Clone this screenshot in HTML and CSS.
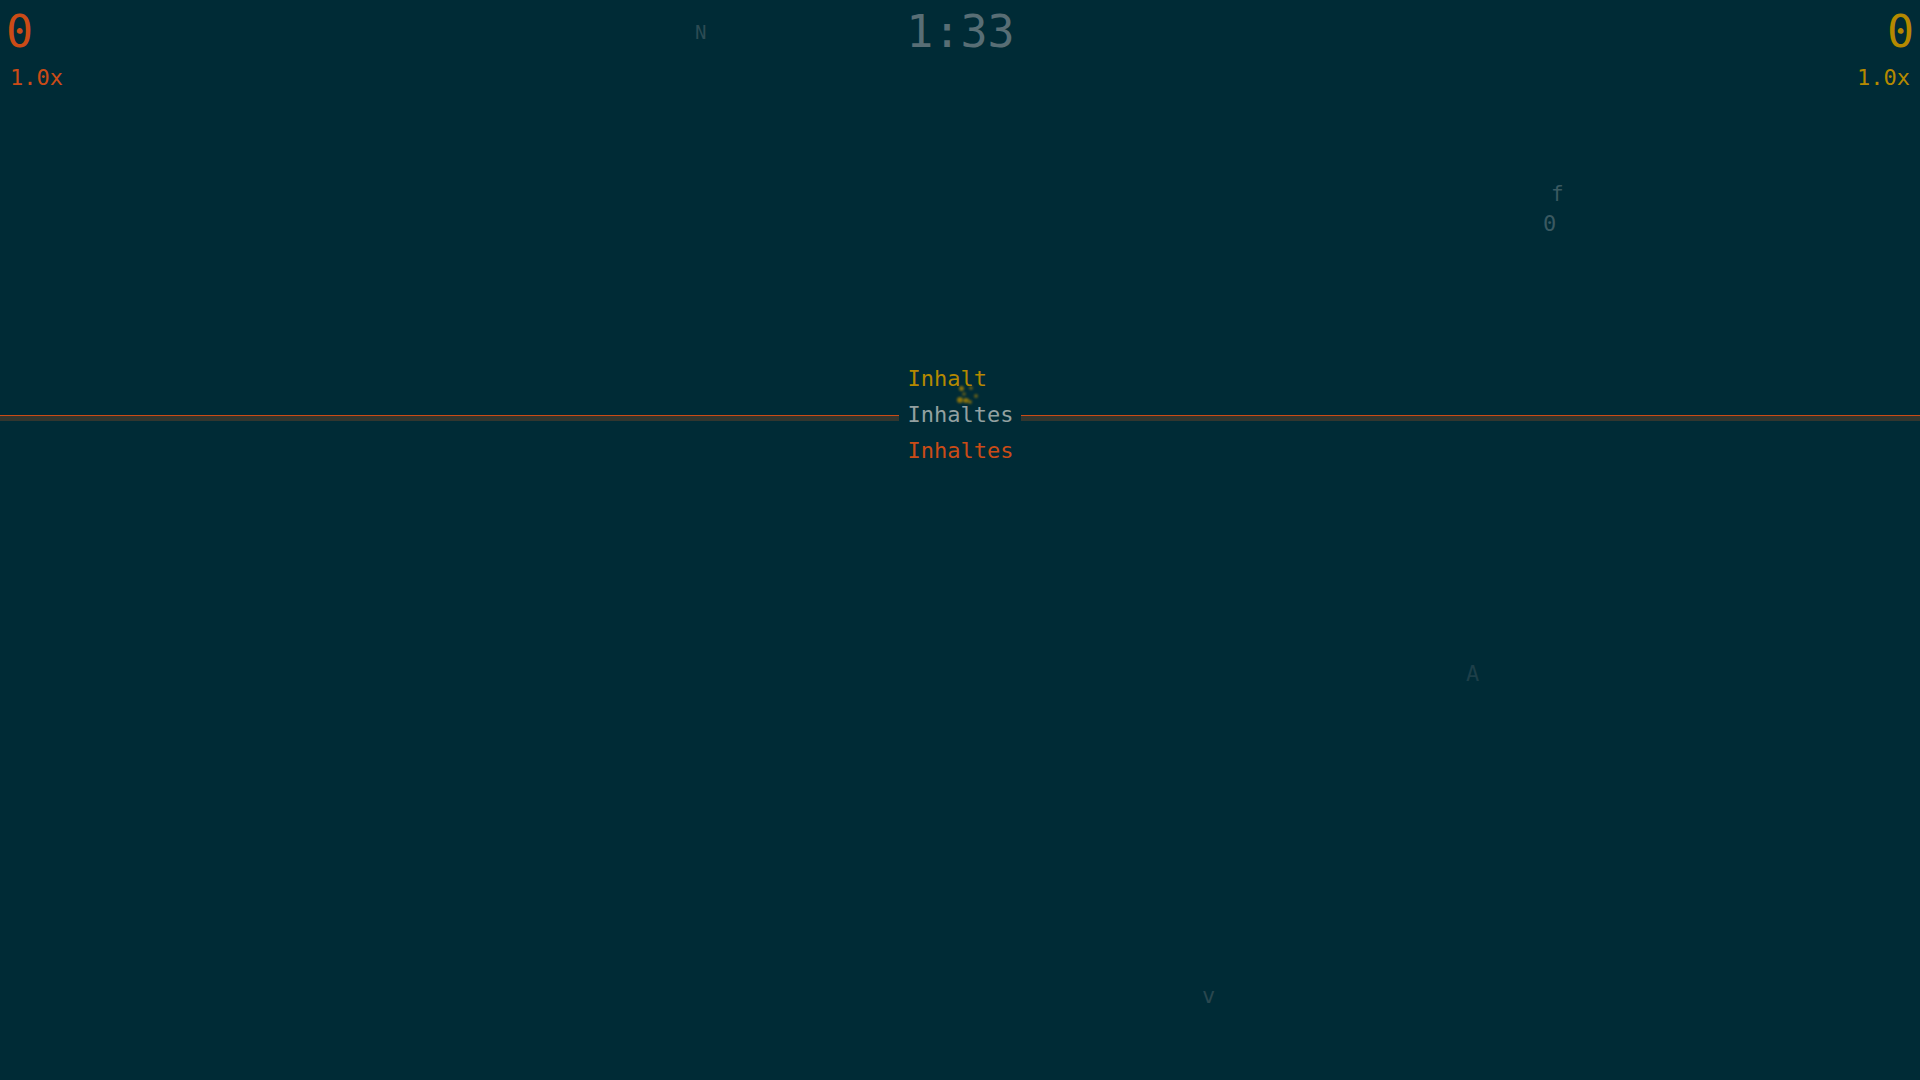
FILE: index.html
```html
<!DOCTYPE html>
<html lang="de">
<head>
<meta charset="utf-8">
<title>Tippspiel</title>
<link rel="stylesheet" href="styles.css">
</head>
<body>
<div class="game">
  <header class="hud">
    <div class="player p1">
      <div class="score">0</div>
      <div class="mult">1.0x</div>
    </div>
    <div class="timer">1:33</div>
    <div class="player p2">
      <div class="score">0</div>
      <div class="mult">1.0x</div>
    </div>
  </header>
  <main class="arena">
    <div class="lane">
      <div class="word w-top">Inhalt</div>
      <div class="rule rule-left"></div>
      <div class="word w-mid">Inhaltes</div>
      <div class="rule rule-right"></div>
      <div class="word w-bot">Inhaltes</div>
    </div>
  </main>
  <div class="float f-n">N</div>
  <div class="float f-f">f</div>
  <div class="float f-0">0</div>
  <div class="float f-a">A</div>
  <div class="float f-v">v</div>
  <div class="spark s1"></div>
  <div class="spark s2"></div>
  <div class="spark s3"></div>
  <div class="spark s4"></div>
  <div class="spark s5"></div>
  <div class="spark s6"></div>
  <div class="spark s7"></div>
</div>
</body>
</html>
```
FILE: styles.css
```css
html, body {
  margin: 0;
  padding: 0;
  background: #002b36;
  overflow: hidden;
}

.game {
  position: relative;
  width: 1920px;
  height: 1080px;
  font-family: "DejaVu Sans Mono", "Liberation Mono", monospace;
  color: #93a1a1;
}

.hud {
  display: grid;
  grid-template-columns: 1fr auto 1fr;
  align-items: start;
  padding-top: 6px;
}

.player {
  display: flex;
  flex-direction: column;
}

.p1 {
  color: #cb4b16;
  padding-left: 6px;
  align-items: flex-start;
}

.p1 .mult {
  padding-left: 4px;
}

.p2 {
  color: #b58900;
  justify-self: end;
  align-items: flex-end;
  padding-right: 6px;
}

.p2 .mult {
  padding-right: 4px;
}

.score {
  font-size: 45px;
  line-height: 52px;
}

.mult {
  font-size: 22px;
  line-height: 26px;
  margin-top: 7px;
}

.timer {
  font-size: 45px;
  line-height: 52px;
  color: #586e75;
  padding-left: 1px;
}

.arena {
  padding-top: 270px;
}

.lane {
  display: grid;
  grid-template-columns: 1fr auto 1fr;
  column-gap: 8px;
  font-size: 22px;
  line-height: 36px;
}

.word {
  grid-column: 2;
  white-space: pre;
  padding-left: 1px;
}

.w-top {
  grid-row: 1;
  color: #b58900;
}

.w-mid {
  grid-row: 2;
  color: #93a1a1;
}

.w-bot {
  grid-row: 3;
  color: #cb4b16;
}

.rule {
  grid-row: 2;
  align-self: center;
  height: 5px;
  margin-top: 6px;
  border-top: 1px solid #cb4b16;
  background: #32362f;
}

.rule-left {
  grid-column: 1;
}

.rule-right {
  grid-column: 3;
}

.float {
  position: absolute;
  line-height: 1;
}

.f-n {
  left: 695px;
  top: 23px;
  font-size: 19px;
  color: #2c4b54;
}

.f-f {
  left: 1551px;
  top: 184px;
  font-size: 21px;
  color: #3a5961;
}

.f-0 {
  left: 1543px;
  top: 213px;
  font-size: 22px;
  color: #3a5961;
}

.f-a {
  left: 1466px;
  top: 663px;
  font-size: 22px;
  color: #1d3f49;
}

.f-v {
  left: 1202px;
  top: 985px;
  font-size: 22px;
  color: #29474f;
}

.spark {
  position: absolute;
  border-radius: 50%;
  background: rgba(181, 137, 0, 0.75);
  filter: blur(1px);
}

.s1 { left: 959px; top: 386px; width: 5px; height: 5px; }
.s2 { left: 969px; top: 386px; width: 4px; height: 4px; background: rgba(181, 137, 0, 0.5); }
.s3 { left: 957px; top: 397px; width: 6px; height: 6px; }
.s4 { left: 963px; top: 398px; width: 6px; height: 5px; }
.s5 { left: 974px; top: 394px; width: 4px; height: 4px; background: rgba(181, 137, 0, 0.55); }
.s6 { left: 962px; top: 392px; width: 4px; height: 4px; background: rgba(181, 137, 0, 0.45); }
.s7 { left: 968px; top: 400px; width: 4px; height: 4px; background: rgba(181, 137, 0, 0.6); }
```
